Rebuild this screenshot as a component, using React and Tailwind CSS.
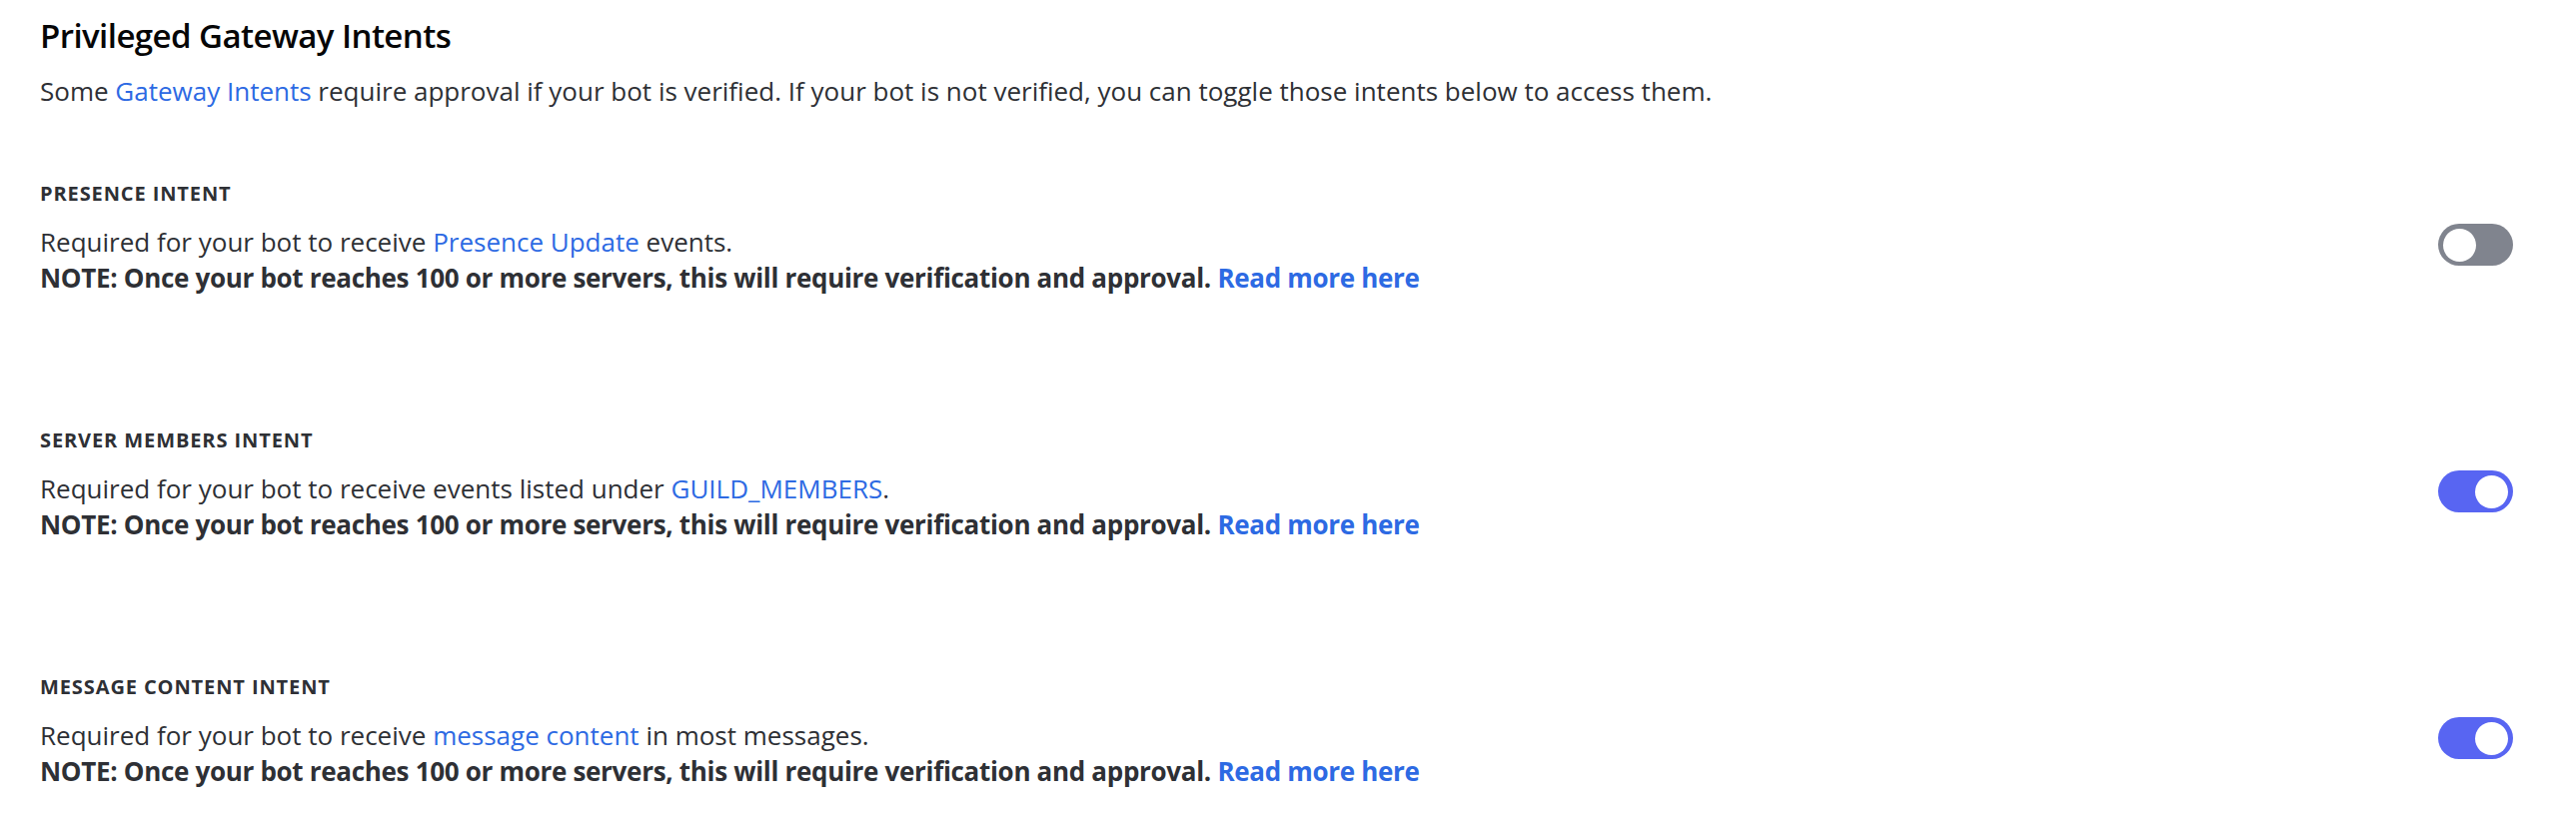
import { useState } from "react";

const intents = [
  {
    id: "presence",
    label: "Presence Intent",
    before: "Required for your bot to receive ",
    link: "Presence Update",
    after: " events.",
    enabled: false,
  },
  {
    id: "members",
    label: "Server Members Intent",
    before: "Required for your bot to receive events listed under ",
    link: "GUILD_MEMBERS",
    after: ".",
    enabled: true,
  },
  {
    id: "content",
    label: "Message Content Intent",
    before: "Required for your bot to receive ",
    link: "message content",
    after: " in most messages.",
    enabled: true,
  },
];

function Toggle({ checked, onChange }) {
  return (
    <button
      type="button"
      onClick={() => onChange(!checked)}
      className={`flex h-[42px] w-[75px] shrink-0 items-center rounded-full px-[5px] transition ${
        checked ? "justify-end bg-[#5865f2]" : "justify-start bg-[#80848e]"
      }`}
    >
      <span className="block h-[33px] w-[33px] rounded-full bg-white" />
    </button>
  );
}

function IntentRow({ intent, checked, onChange }) {
  return (
    <div className="flex items-start justify-between">
      <div>
        <h5 className="text-[20px] leading-[24px] font-bold uppercase tracking-[0.045em] text-[#2e3035] mb-[18px]">
          {intent.label}
        </h5>
        <p className="text-[26px] leading-[36px] text-[#2e3035]">
          {intent.before}
          <a href="#" className="text-[#2d6ae3]">{intent.link}</a>
          {intent.after}
        </p>
        <p className="text-[26px] leading-[36px] font-bold tracking-[-0.012em] text-[#2e3035]">
          NOTE: Once your bot reaches 100 or more servers, this will require verification and approval.{" "}
          <a href="#" className="text-[#2d6ae3]">Read more here</a>
        </p>
      </div>
      <div className="mt-[42px]">
        <Toggle checked={checked} onChange={onChange} />
      </div>
    </div>
  );
}

export default function App() {
  const [state, setState] = useState(
    Object.fromEntries(intents.map((i) => [i.id, i.enabled]))
  );

  return (
    <div className="min-h-screen bg-white pl-[40px] pr-[63px] pt-[16px] font-['Open_Sans',sans-serif]">
      <h2 className="text-[33px] leading-[40px] font-semibold tracking-[-0.017em] text-[#060607]">
        Privileged Gateway Intents
      </h2>
      <p className="mt-[17px] text-[26px] leading-[36px] text-[#2e3035]">
        Some <a href="#" className="text-[#2d6ae3]">Gateway Intents</a> require approval if your bot is verified. If your bot is not verified, you can toggle those intents below to access them.
      </p>
      <div className="mt-[73px] flex flex-col gap-[133px]">
        {intents.map((intent) => (
          <IntentRow
            key={intent.id}
            intent={intent}
            checked={state[intent.id]}
            onChange={(v) => setState((s) => ({ ...s, [intent.id]: v }))}
          />
        ))}
      </div>
    </div>
  );
}
